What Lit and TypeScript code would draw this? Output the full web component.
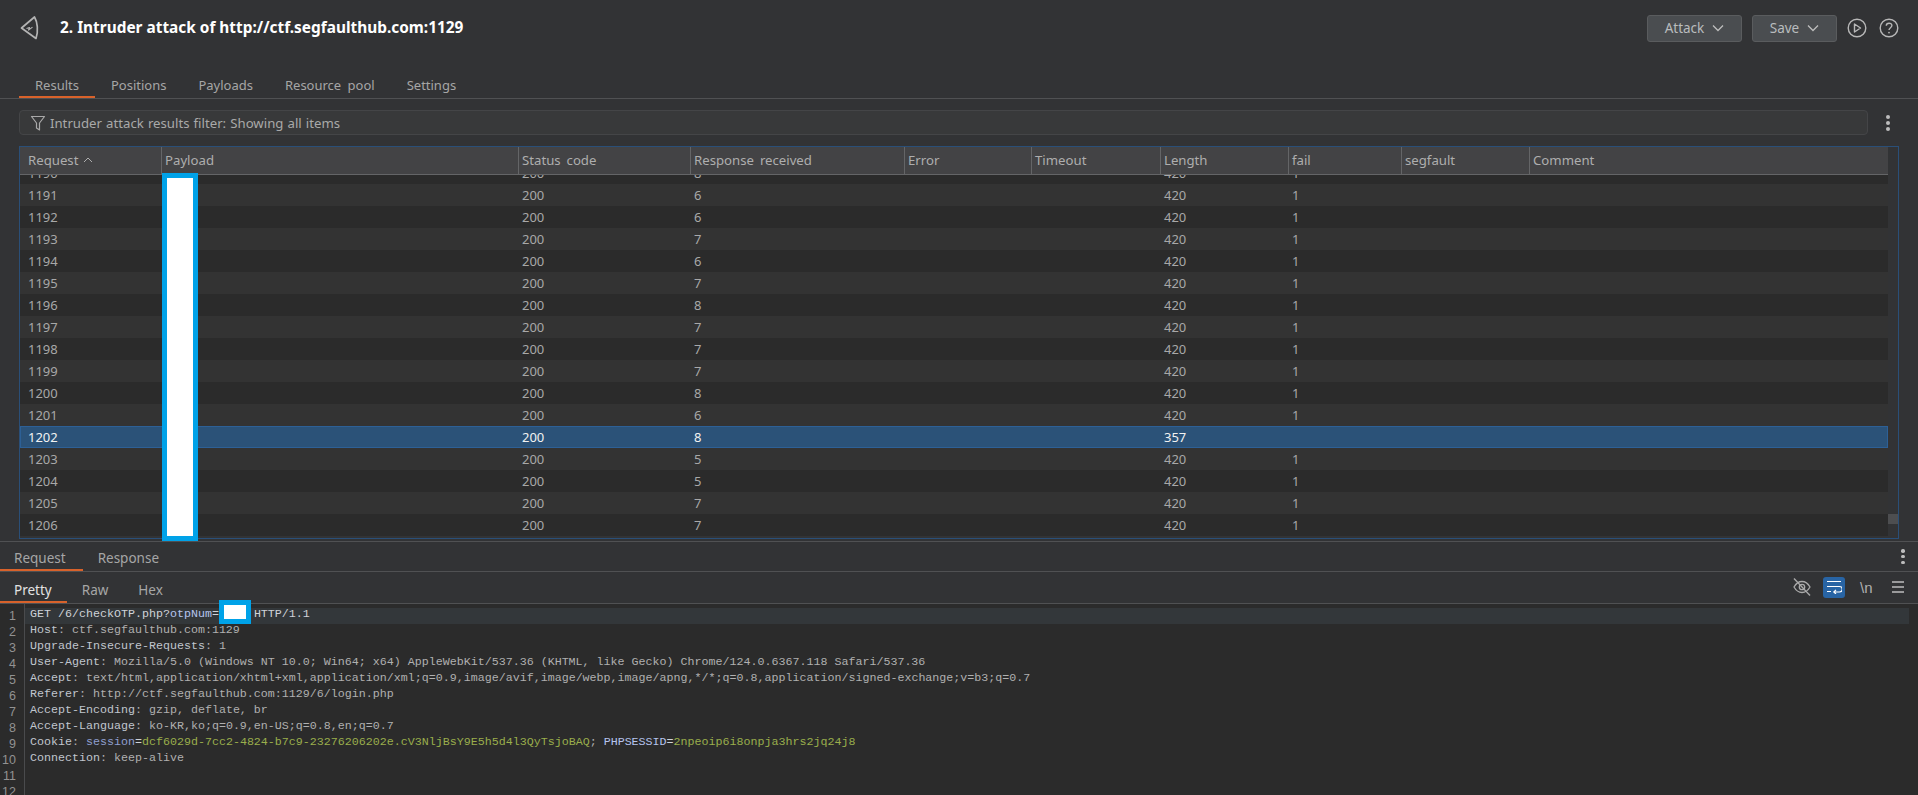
import { LitElement, html, css, svg } from "lit";
import { customElement } from "lit/decorators.js";

const rows: [number, number, number, boolean][] = [
  [1190, 8, 420, true],[1191, 6, 420, true],[1192, 6, 420, true],[1193, 7, 420, true],
  [1194, 6, 420, true],[1195, 7, 420, true],[1196, 8, 420, true],[1197, 7, 420, true],
  [1198, 7, 420, true],[1199, 7, 420, true],[1200, 8, 420, true],[1201, 6, 420, true],
  [1202, 8, 357, false],[1203, 5, 420, true],[1204, 5, 420, true],[1205, 7, 420, true],[1206, 7, 420, true],
];
const cols = ["Request", "Payload", "Status code", "Response received", "Error", "Timeout", "Length", "fail", "segfault", "Comment"];

const chevron = svg`<svg class="chev" width="12" height="8" viewBox="0 0 12 8" fill="none" stroke="#bdbdbd" stroke-width="1.3"><path d="M1 1.5l5 5 5-5"/></svg>`;

@customElement("app-root")
export class AppRoot extends LitElement {
  static styles = css`
    :host { display: flex; flex-direction: column; width: 1918px; height: 795px; overflow: hidden; background: #323335; color: #b4b4b4; font-family: "Noto Sans", sans-serif; font-size: 13px; position: relative; }
    .top { height: 56px; display: flex; align-items: center; padding: 0 19px 0 19px; flex: none; }
    .logo { width: 22px; height: 26px; margin-right: 19px; margin-top: -1px; flex: none; }
    h1 { margin: 0; font-size: 15.4px; font-weight: 700; color: #fff; flex: 1; margin-top: -2px; }
    .btn { height: 27px; box-sizing: border-box; display: flex; align-items: center; justify-content: center; gap: 8px; background: #4a4d50; border: 1px solid #5a5c5e; border-radius: 3px; color: #b9bcbe; font-size: 13.5px; }
    .btn.a { width: 95px; margin-right: 10px; }
    .btn.s { width: 85px; margin-right: 10px; }
    .round { width: 20px; height: 20px; margin-right: 12px; display: block; }
    .round:last-child { margin-right: 0; }
    .tabs { display: flex; height: 43px; padding-left: 19px; border-bottom: 1px solid #505153; flex: none; box-sizing: border-box; align-items: flex-end; }
    .tab { height: 23px; padding: 0 16px; display: flex; align-items: flex-start; line-height: 20px; box-sizing: border-box; color: #a6a6a6; font-size: 13px; word-spacing: 3px; }
    .tabs .tab.on { border-bottom: 2px solid #d8622b; }
    .filterrow { display: flex; align-items: center; margin: 11px 0 11px 19px; height: 25px; flex: none; }
    .filter { width: 1849px; height: 25px; box-sizing: border-box; background: #38393a; border: 1px solid #444547; border-radius: 4px; display: flex; align-items: center; padding-left: 10px; gap: 4px; color: #a9a9a9; font-size: 13.2px; word-spacing: 0.7px; }
    .dots { margin-left: 18px; width: 4px; height: 16px; display: flex; flex-direction: column; justify-content: space-between; align-items: center; }
    .dots i { width: 4px; height: 4px; border-radius: 50%; background: #bdbdbd; display: block; }
    .table { margin-left: 19px; width: 1880px; height: 393px; box-sizing: border-box; border: 1px solid #2a4f78; flex: none; display: flex; position: relative; overflow: hidden; }
    .main { width: 1869px; display: flex; flex-direction: column; overflow: hidden; }
    .grid { display: grid; grid-template-columns: 142px 357px 172px 214px 127px 129px 128px 113px 128px 1fr; }
    .head { background: #434345; height: 27px; border-bottom: 1px solid #646567; flex: none; }
    .head > div { border-right: 1px solid #646567; padding-left: 3px; line-height: 27px; color: #aeaeae; font-size: 13.2px; word-spacing: 2.5px; white-space: nowrap; }
    .head > div:first-child { padding-left: 8px; }
    .head > div:last-child { border-right: 0; }
    .caret { margin-left: 5px; vertical-align: 2px; }
    .list { flex: 1; overflow: hidden; }
    .row { height: 22px; line-height: 23px; background: #2b2b2b; color: #a8a8a8; font-size: 13px; box-sizing: border-box; }
    .row:first-child { margin-top: -13px; }
    .row.alt { background: #333333; }
    .row.sel { background: #2b5278; color: #f2f2f2; box-shadow: inset 0 0 0 1px #2d6096; }
    .row > div { padding-left: 3px; }
    .row > div:first-child { padding-left: 8px; }
    .track { width: 10px; background: #323335; position: relative; flex: none; }
    .thumb { position: absolute; left: 0; width: 10px; top: 367px; height: 10px; background: #4d4e50; }
    .sub { margin-top: 2px; border-top: 1px solid #505153; border-bottom: 1px solid #505153; display: flex; box-sizing: border-box; flex: none; position: relative; height: 31px; }
    .sub2 { height: 32px; border-bottom: 1px solid #505153; display: flex; box-sizing: border-box; flex: none; align-items: stretch; }
    .tab2 { color: #a6a6a6; font-size: 13.5px; box-sizing: border-box; }
    .tab2.on { border-bottom: 2px solid #d8622b; }
    .sub .tab2 { height: 29px; line-height: 32px; padding: 0 15px; }
    .sub .tab2.on { padding: 0 17px 0 14px; }
    .sub2 .tab2 { height: 31px; line-height: 37px; padding: 0 15px; }
    .sub2 .tab2.on { color: #e2e2e2; padding: 0 15px 0 14px; }
    .sub .dots { position: absolute; right: 13px; top: 7px; margin: 0; height: 15px; width: 4px; }
    .sub .dots i { width: 3.5px; height: 3.5px; }
    .tools { margin-left: auto; display: flex; align-items: center; margin-right: 0; margin-top: -1px; }
    .tools svg { display: block; }
    .tools .wrapbtn { width: 22px; height: 21px; border-radius: 3px; background: #2864a4; display: flex; align-items: center; justify-content: center; margin: 0 15px 0 11px; }
    .nl { font-family: "Liberation Sans", sans-serif; font-size: 15px; color: #b0b0b0; margin-right: 17px; width: 14px; }
    .ham { margin-right: 13px; }
    .editor { flex: 1; background: #2b2b2b; display: flex; overflow: hidden; padding-top: 4px; min-height: 0; }
    .gutter { width: 24px; border-right: 1px solid #4a4b4d; margin-top: -4px; padding-top: 4px; text-align: right; flex: none; }
    .gutter div { height: 16px; line-height: 17px; padding-right: 8px; font-family: "Liberation Sans", sans-serif; font-size: 12.5px; color: #929292; }
    .code { flex: 1; font-family: "Liberation Mono", monospace; font-size: 11.67px; color: #b0b0b0; position: relative; }
    .ln { height: 16px; line-height: 13px; padding-left: 5px; margin-right: 9px; white-space: pre; }
    .ln.cur { background: #33373a; }
    .k { color: #c0c6ce; }
    .m { color: #cfd3d8; }
    .ck { color: #8f9fd0; }
    .ck2 { color: #b5c4ee; }
    .v { color: #9aae4c; }
    .redact { position: absolute; box-sizing: border-box; background: #fff; border: 5px solid #00a2e8; }
    .r1 { left: 162px; top: 173px; width: 36px; height: 368px; }
    .r2 { left: 219px; top: 600px; width: 32px; height: 24px; }
  `;

  render() {
    const sep = html`<span>: </span>`;
    return html`
      <div class="top">
        <svg class="logo" viewBox="0 0 22 26" fill="none" stroke="#b4b4b4" stroke-width="1.7" stroke-linejoin="round"><path d="M2.500 13L15.500 2c3 5 4 14 1.500 21.500z"/><path d="M7.500 13.500l3-1-1 2.600 4-3" stroke-width="1.100"/></svg>
        <h1>2. Intruder attack of http://ctf.segfaulthub.com:1129</h1>
        <div class="btn a">Attack ${chevron}</div>
        <div class="btn s">Save ${chevron}</div>
        <svg class="round" viewBox="0 0 20 20" fill="none" stroke="#b8b8b8" stroke-width="1.4"><circle cx="10" cy="10" r="8.800"/><path d="M7.500 6l6 4-6 4z" stroke-linejoin="round"/></svg>
        <svg class="round" viewBox="0 0 20 20" fill="none" stroke="#b8b8b8" stroke-width="1.4"><circle cx="10" cy="10" r="8.800"/><path d="M7.300 7.800c0-3.400 5.600-3.400 5.600-.2 0 2-2.900 2.200-2.900 4.400"/><circle cx="10" cy="14.600" r=".9" fill="#b8b8b8" stroke="none"/></svg>
      </div>
      <div class="tabs">
        <div class="tab on">Results</div><div class="tab">Positions</div><div class="tab">Payloads</div><div class="tab">Resource pool</div><div class="tab">Settings</div>
      </div>
      <div class="filterrow">
        <div class="filter">
          <svg width="16" height="16" viewBox="0 0 16 16" fill="none" stroke="#a9a9a9" stroke-width="1.2" stroke-linejoin="round"><path d="M1.500 1.500h13L9.500 8v7l-3-2V8z"/></svg>
          Intruder attack results filter: Showing all items
        </div>
        <div class="dots"><i></i><i></i><i></i></div>
      </div>
      <div class="table">
        <div class="main">
          <div class="grid head">
            ${cols.map((c, i) => html`<div>${c}${i === 0 ? html`<svg class="caret" width="10" height="6" viewBox="0 0 10 6" fill="none" stroke="#aeaeae" stroke-width="1"><path d="M1 5l4-4 4 4"/></svg>` : ""}</div>`)}
          </div>
          <div class="list">
            ${rows.map((r, i) => html`
              <div class="grid row ${i % 2 ? "alt" : ""} ${r[0] === 1202 ? "sel" : ""}">
                <div>${r[0]}</div><div></div><div>200</div><div>${r[1]}</div><div></div><div></div><div>${r[2]}</div><div>${r[3] ? "1" : ""}</div><div></div><div></div>
              </div>`)}
          </div>
        </div>
        <div class="track"><div class="thumb"></div></div>
      </div>
      <div class="sub">
        <div class="tab2 on">Request</div><div class="tab2">Response</div>
        <div class="dots"><i></i><i></i><i></i></div>
      </div>
      <div class="sub2">
        <div class="tab2 on">Pretty</div><div class="tab2">Raw</div><div class="tab2">Hex</div>
        <div class="tools">
          <svg width="20" height="20" viewBox="0 0 20 20" fill="none" stroke="#aaaaaa" stroke-width="1.300"><path d="M2 10c2-3.500 5-5.500 8-5.500s6 2 8 5.500c-2 3.500-5 5.500-8 5.500s-6-2-8-5.500z"/><circle cx="10" cy="10" r="2.700"/><path d="M2 1.500l16 17"/></svg>
          <div class="wrapbtn"><svg width="16" height="14" viewBox="0 0 16 14" fill="none" stroke="#fff" stroke-width="1.200"><path d="M1 1.500h14M1 6.500h12.500a2.500 2.500 0 0 1 0 5.500H8M10 9.800L7.800 12l2.200 2M1 11.500h4"/></svg></div>
          <span class="nl">\\n</span>
          <svg class="ham" width="14" height="14" viewBox="0 0 14 14" stroke="#bdbdbd" stroke-width="1.300"><path d="M1 2h12M1 7h12M1 12h12"/></svg>
        </div>
      </div>
      <div class="editor">
        <div class="gutter">${[1,2,3,4,5,6,7,8,9,10,11,12].map((n) => html`<div>${n}</div>`)}</div>
        <div class="code">
          <div class="ln cur"><span class="m">GET /6/checkOTP.php?</span><span class="ck2">otpNum</span><span class="m">=</span>     <span class="m">HTTP/1.1</span></div>
          <div class="ln"><span class="k">Host</span>${sep}ctf.segfaulthub.com:1129</div>
          <div class="ln"><span class="k">Upgrade-Insecure-Requests</span>${sep}1</div>
          <div class="ln"><span class="k">User-Agent</span>${sep}Mozilla/5.0 (Windows NT 10.0; Win64; x64) AppleWebKit/537.36 (KHTML, like Gecko) Chrome/124.0.6367.118 Safari/537.36</div>
          <div class="ln"><span class="k">Accept</span>${sep}text/html,application/xhtml+xml,application/xml;q=0.9,image/avif,image/webp,image/apng,*/*;q=0.8,application/signed-exchange;v=b3;q=0.7</div>
          <div class="ln"><span class="k">Referer</span>${sep}http://ctf.segfaulthub.com:1129/6/login.php</div>
          <div class="ln"><span class="k">Accept-Encoding</span>${sep}gzip, deflate, br</div>
          <div class="ln"><span class="k">Accept-Language</span>${sep}ko-KR,ko;q=0.9,en-US;q=0.8,en;q=0.7</div>
          <div class="ln"><span class="k">Cookie</span>${sep}<span class="ck">session</span><span class="m">=</span><span class="v">dcf6029d-7cc2-4824-b7c9-23276206202e.cV3NljBsY9E5h5d4l3QyTsjoBAQ</span>; <span class="ck2">PHPSESSID</span><span class="m">=</span><span class="v">2npeoip6i8onpja3hrs2jq24j8</span></div>
          <div class="ln"><span class="k">Connection</span>${sep}keep-alive</div>
        </div>
      </div>
      <div class="redact r1"></div>
      <div class="redact r2"></div>
    `;
  }
}
